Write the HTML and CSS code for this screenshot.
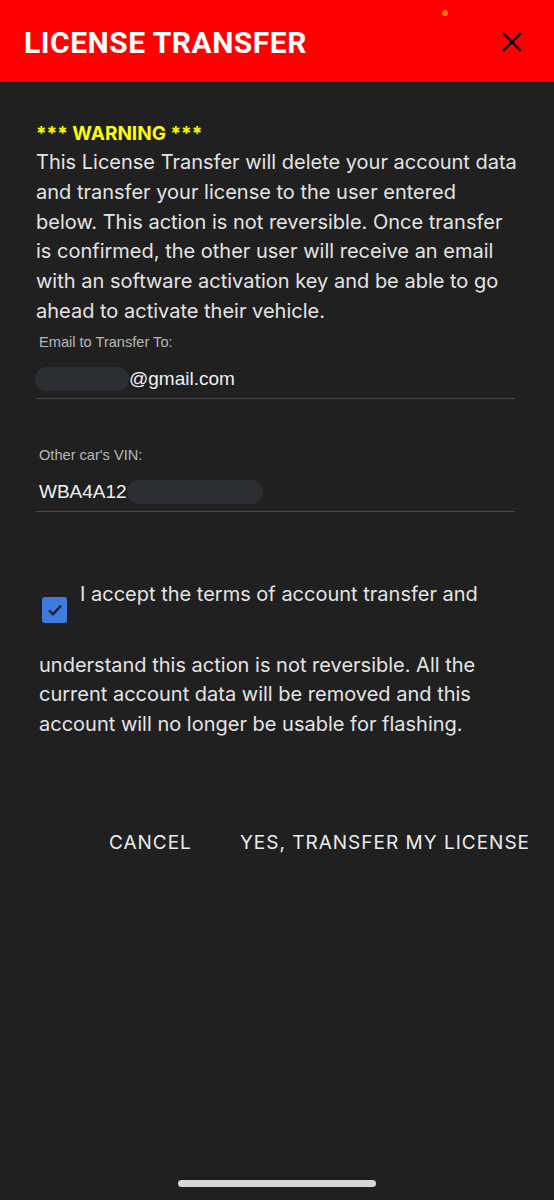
FILE: index.html
```html
<!DOCTYPE html>
<html lang="en">
<head>
    <meta charset="UTF-8">
    <meta name="viewport" content="width=device-width, initial-scale=1.0">
    <title>License Transfer</title>
    <link rel="stylesheet" href="styles.css">
</head>
<body>
    <div id="header">
        <h1 id="title">LICENSE TRANSFER</h1>
        <span class="dot"></span>
        <svg class="close" width="24" height="24" viewBox="0 0 24 24">
            <path d="M3 3 L21 21 M21 3 L3 21" stroke="#000" stroke-width="2.4" fill="none"/>
        </svg>
    </div>

    <div class="content">
        <p class="warning">*** WARNING ***</p>
        <p class="message">This License Transfer will delete your account data and transfer your license to the user entered below. This action is not reversible. Once transfer is confirmed, the other user will receive an email with an software activation key and be able to go ahead to activate their vehicle.</p>

        <div class="field">
            <label class="label">Email to Transfer To:</label>
            <div class="value"><span class="blur blur-email"></span>@gmail.com</div>
        </div>

        <div class="field field-vin">
            <label class="label">Other car's VIN:</label>
            <div class="value">WBA4A12<span class="blur blur-vin"></span></div>
        </div>

        <div class="accept">
            <span class="checkbox">
                <svg width="18" height="18" viewBox="0 0 18 18">
                    <path d="M3 9.5 L7 13.2 L15 4.5" stroke="#1a1a1a" stroke-width="2.3" fill="none"/>
                </svg>
            </span>
            <span class="accept-text">I accept the terms of account transfer and</span>
        </div>
        <p class="terms">understand this action is not reversible. All the current account data will be removed and this account will no longer be usable for flashing.</p>

        <div class="actions">
            <button class="btn">CANCEL</button>
            <button class="btn">YES, TRANSFER MY LICENSE</button>
        </div>
    </div>

    <div class="home-bar"></div>
</body>
</html>
```

FILE: styles.css
```css
* {
    margin: 0;
    padding: 0;
    box-sizing: border-box;
}

body {
    font-family: Inter, "Liberation Sans", sans-serif;
    background-color: #202020;
    color: #e4e4e4;
    height: 1200px;
    position: relative;
}

#header {
    background-color: #ff0000;
    height: 82px;
    display: flex;
    align-items: center;
    padding: 0 30px 0 24px;
    position: relative;
}

#title {
    font-family: Roboto, sans-serif;
    font-size: 30px;
    letter-spacing: 0.5px;
    font-weight: bold;
    color: #fff;
    margin-top: 2px;
}

.dot {
    position: absolute;
    left: 442px;
    top: 10px;
    width: 6px;
    height: 6px;
    border-radius: 50%;
    background-color: #ff7a00;
}

.close {
    margin-left: auto;
    margin-top: 2px;
}

.content {
    padding: 40px 36px 0 36px;
}

.warning {
    color: #ffff00;
    font-weight: bold;
    font-size: 19px;
    line-height: 24px;
}

.message {
    font-size: 20px;
    line-height: 29.8px;
    margin-top: 2px;
}

.field {
    padding: 0 3px;
    margin-top: 5px;
    border-bottom: 1px solid #4a4a4a;
    margin-right: 3px;
}

.field-vin {
    margin-top: 46px;
}

.label {
    display: block;
    font-family: "Liberation Sans", sans-serif;
    font-size: 14.6px;
    color: #b8b8b8;
    line-height: 20px;
}

.value {
    font-family: "Liberation Sans", sans-serif;
    font-size: 19px;
    color: #f0f0f0;
    height: 46px;
    display: flex;
    align-items: center;
    padding-top: 8px;
}

.blur {
    display: inline-block;
    height: 24px;
    border-radius: 12px;
    background-color: #2b2e32;
}

.blur-email {
    width: 94px;
    margin-left: -4px;
}

.blur-vin {
    width: 136px;
}

.accept {
    display: flex;
    align-items: flex-start;
    margin-top: 72px;
    padding-left: 6px;
}

.checkbox {
    width: 25px;
    height: 26px;
    border-radius: 3px;
    background-color: #3f7ae0;
    display: flex;
    align-items: center;
    justify-content: center;
    margin-top: 13px;
}

.accept-text {
    font-size: 20px;
    line-height: 24px;
    margin-left: 13px;
    margin-top: -2px;
}

.terms {
    font-size: 20px;
    line-height: 29.7px;
    padding-left: 3px;
    margin-top: 28px;
}

.actions {
    display: flex;
    justify-content: flex-end;
    gap: 48px;
    margin-top: 91px;
    margin-right: -12px;
}

.btn {
    background: none;
    border: none;
    color: #ececec;
    font-family: Inter, sans-serif;
    font-size: 19px;
    letter-spacing: 1px;
}

.home-bar {
    position: absolute;
    left: 178px;
    top: 1180px;
    width: 198px;
    height: 7px;
    border-radius: 4px;
    background-color: #d6d6d6;
}
```
